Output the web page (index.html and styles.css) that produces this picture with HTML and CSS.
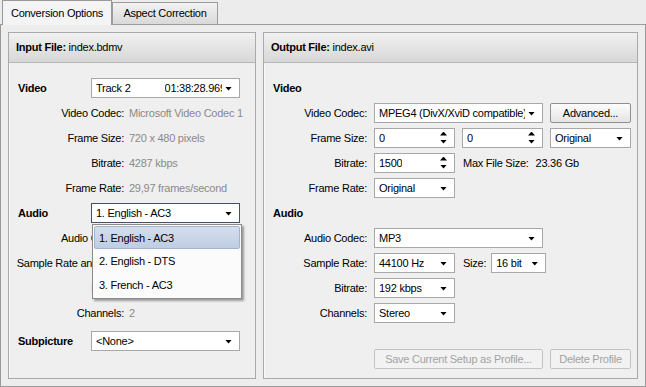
FILE: index.html
```html
<!DOCTYPE html><html>
<head>
  <meta charset="utf-8">
  <title>Conversion Options</title>
  <link rel="stylesheet" href="styles.css">
</head><body>

<div class="tabs">
  <div class="tab active">Conversion Options</div>
  <div class="tab">Aspect Correction</div>
</div>

<div class="pane">
  <!-- Source file -->
  <section class="panel input">
    <div class="panel-head"><b>Input File:</b> index.bdmv</div>
    <div class="panel-body">
      <div class="row">
        <span class="sect">Video</span>
        <div class="select w149"><span class="txt">Track 2</span><span class="txt dur">01:38:28.969</span></div>
      </div>
      <div class="row"><span class="lbl"><span>Video Codec:</span></span><span class="val">Microsoft Video Codec 1</span></div>
      <div class="row"><span class="lbl"><span>Frame Size:</span></span><span class="val">720 x 480 pixels</span></div>
      <div class="row"><span class="lbl"><span>Bitrate:</span></span><span class="val">4287 kbps</span></div>
      <div class="row"><span class="lbl"><span>Frame Rate:</span></span><span class="val">29,97 frames/second</span></div>
      <div class="row">
        <span class="sect">Audio</span>
        <div class="select w149 focus"><span class="txt">1. English - AC3</span></div>
      </div>
      <!-- these three rows sit under the open list -->
      <div class="row"><span class="lbl"><span>Audio Codec:</span></span></div>
      <div class="row"><span class="lbl"><span>Sample Rate and Size:</span></span></div>
      <div class="row"><span class="lbl"><span>Bitrate:</span></span></div>
      <div class="row"><span class="lbl"><span>Channels:</span></span><span class="val">2</span></div>
      <div class="row sub">
        <span class="sect">Subpicture</span>
        <div class="select w149"><span class="txt">&lt;None&gt;</span></div>
      </div>
    </div>
    <ul class="droplist">
      <li class="hot">1. English - AC3</li>
      <li>2. English - DTS</li>
      <li>3. French - AC3</li>
    </ul>
  </section>

  <!-- Target file -->
  <section class="panel output">
    <div class="panel-head"><b>Output File:</b> index.avi</div>
    <div class="panel-body">
      <div class="row"><span class="sect">Video</span></div>
      <div class="row">
        <span class="lbl"><span>Video Codec:</span></span>
        <div class="select w169"><span class="txt">MPEG4 (DivX/XviD compatible)</span></div>
        <button class="btn w81">Advanced...</button>
      </div>
      <div class="row">
        <span class="lbl"><span>Frame Size:</span></span>
        <div class="spin w81"><span class="txt">0</span></div>
        <div class="spin w81"><span class="txt">0</span></div>
        <div class="select w81"><span class="txt">Original</span></div>
      </div>
      <div class="row">
        <span class="lbl"><span>Bitrate:</span></span>
        <div class="spin w81"><span class="txt">1500</span></div>
        <span class="note">Max File Size:</span><span class="note size">23.36 Gb</span>
      </div>
      <div class="row">
        <span class="lbl"><span>Frame Rate:</span></span>
        <div class="select w81"><span class="txt">Original</span></div>
      </div>
      <div class="row"><span class="sect">Audio</span></div>
      <div class="row">
        <span class="lbl"><span>Audio Codec:</span></span>
        <div class="select w169"><span class="txt">MP3</span></div>
      </div>
      <div class="row">
        <span class="lbl"><span>Sample Rate:</span></span>
        <div class="select w81"><span class="txt">44100 Hz</span></div>
        <span class="note">Size:</span>
        <div class="select w55"><span class="txt">16 bit</span></div>
      </div>
      <div class="row">
        <span class="lbl"><span>Bitrate:</span></span>
        <div class="select w81"><span class="txt">192 kbps</span></div>
      </div>
      <div class="row">
        <span class="lbl"><span>Channels:</span></span>
        <div class="select w81"><span class="txt">Stereo</span></div>
      </div>
      <div class="row actions">
        <button class="btn w169" disabled>Save Current Setup as Profile...</button>
        <button class="btn w81" disabled>Delete Profile</button>
      </div>
    </div>
  </section>
</div>

</body></html>
```

FILE: styles.css
```css
* { box-sizing: border-box; }
body {
  margin: 0;
  width: 646px;
  height: 387px;
  font-family: "Liberation Sans", Arial, sans-serif;
  font-size: 11px;
  letter-spacing: -0.25px;
  color: #000;
  background: #ececec;
  overflow: hidden;
}

/* tab strip */
.tabs { display: flex; align-items: flex-end; height: 24px; padding-left: 2px; }
.tab {
  width: 106px; height: 22px; line-height: 20px; text-align: center;
  border: 1px solid #9c9c9c; border-bottom: none;
  background: linear-gradient(#f2f2f2, #d9d9d9);
}
.tab.active {
  width: 110px; height: 25px; line-height: 24px; margin-bottom: -1px;
  background: #f4f4f4; border-color: #9a9a9a; position: relative; z-index: 1;
}

.pane {
  display: flex; gap: 7px;
  height: 363px; padding: 7px;
  border: 1px solid #9a9a9a;
  background: #ededed;
}

/* group boxes */
.panel {
  position: relative;
  height: 347px;
  border: 1px solid #a9a9a9;
  background: #efefef;
  box-shadow: inset 1px 1px 0 #fafafa;
}
.input { width: 248px; }
.output { width: 375px; }
.panel-head {
  height: 30px; line-height: 29px; padding-left: 7px;
  border-bottom: 1px solid #b6b6b6;
  background: linear-gradient(#f1f1f1, #d7d7d7);
}
.panel-body { display: flex; flex-direction: column; gap: 4px; padding: 14px 9px 0 9px; }
.row { display: flex; align-items: center; height: 21px; white-space: nowrap; }
.row.sub { margin-top: 3px; }
.row.actions { margin-top: 21px; padding-left: 101px; gap: 7px; }

.sect { font-weight: bold; width: 73px; flex: none; }
.lbl { display: flex; justify-content: flex-end; flex: none; width: 106px; }
.val { margin-left: 5px; color: #8a8a8a; }
.output .lbl { width: 94px; margin-right: 7px; }
.output .select + .select, .output .spin + .spin, .output .spin + .select { margin-left: 7px; }
.note { margin-left: 8px; }
.note.size { margin-left: 7px; }
.note + .select { margin-left: 5px; }
.select + .btn { margin-left: 7px; }

/* controls */
.select, .spin {
  position: relative; flex: none;
  display: flex; align-items: center;
  height: 20px; padding: 0 17px 0 4px;
  border: 1px solid #a8a8a8;
  background: #fff;
  overflow: hidden;
}
.select.focus { border-color: #45516b; }
.select::after {
  content: ""; position: absolute; right: 7px; top: 8px;
  width: 7px; height: 4px; background: #000;
  clip-path: polygon(0 0, 100% 0, 50% 100%);
}
.spin::before, .spin::after {
  content: ""; position: absolute; right: 7px;
  width: 7px; height: 4px; background: #000;
}
.spin::before { top: 3px; clip-path: polygon(50% 0, 100% 100%, 0 100%); }
.spin::after { top: 11px; clip-path: polygon(0 0, 100% 0, 50% 100%); }
.txt { overflow: hidden; }
.dur { margin-left: 34px; flex: 1; }

.w55 { width: 55px; }
.w81 { width: 81px; }
.w149 { width: 149px; }
.w169 { width: 169px; }

.btn {
  flex: none; height: 20px; padding: 0;
  font: inherit; letter-spacing: inherit; color: #000;
  border: 1px solid #8f8f8f; border-radius: 2px;
  background: linear-gradient(#fdfdfd, #e4e4e4);
}
.btn:disabled { color: #a2a2a2; border-color: #c3c3c3; background: #f2f2f2; }

/* opened drop-down over the left panel */
.droplist {
  position: absolute; left: 83px; top: 191px;
  width: 150px; margin: 0; padding: 1px;
  list-style: none;
  border: 1px solid #8a8a8a;
  background: #fbfbfb;
  box-shadow: 2px 2px 2px rgba(0, 0, 0, .35);
}
.droplist li { height: 24px; line-height: 23px; padding-left: 4px; border: 1px solid transparent; }
.droplist li.hot {
  height: 23px;
  border-color: #a2b4cf; border-radius: 2px;
  background: linear-gradient(#d4dfee, #bfcde2);
}
```
